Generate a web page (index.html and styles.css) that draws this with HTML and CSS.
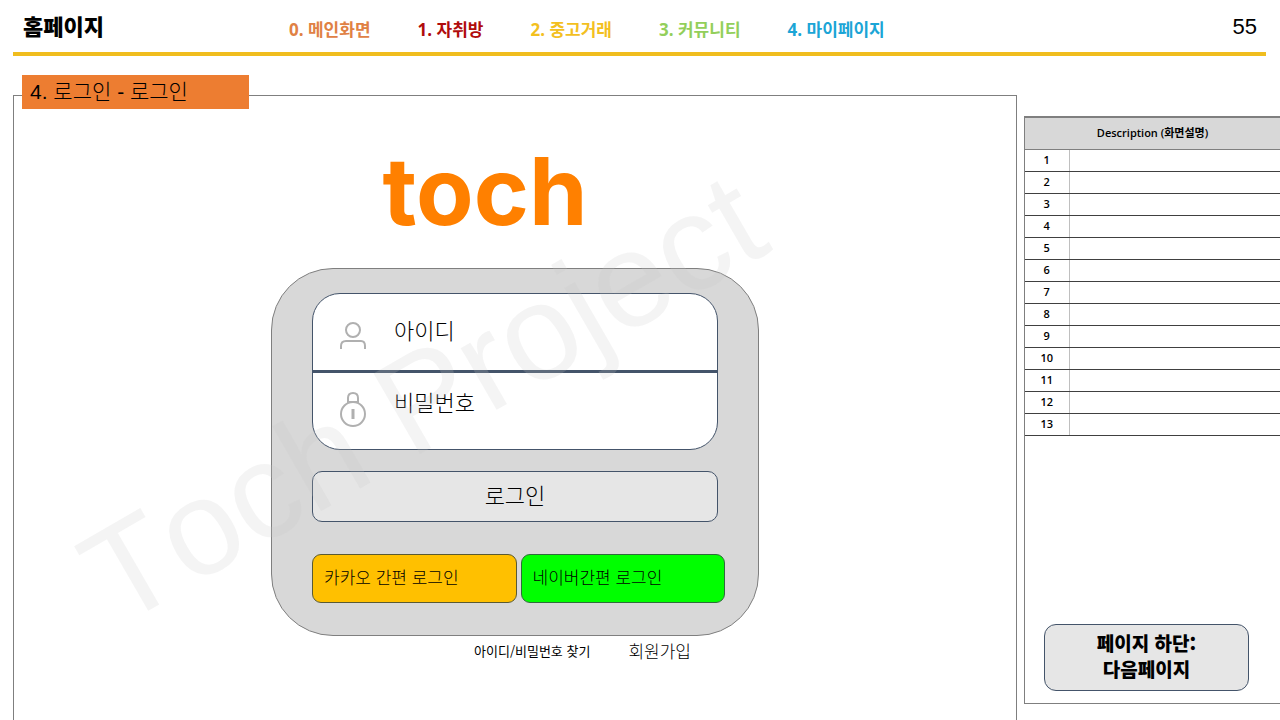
FILE: index.html
```
<!DOCTYPE html>
<html lang="ko">
<head>
    <meta charset="UTF-8">
    <meta name="viewport" content="width=device-width, initial-scale=1.0">
    <title>홈페이지 - 로그인</title>
    <link rel="stylesheet" href="styles.css">
</head>
<body>
    <header class="header">
        <h1 class="title">홈페이지</h1>
        <nav class="menu">
            <a class="menu-main" href="#">0. 메인화면</a>
            <a class="menu-room" href="#">1. 자취방</a>
            <a class="menu-market" href="#">2. 중고거래</a>
            <a class="menu-community" href="#">3. 커뮤니티</a>
            <a class="menu-mypage" href="#">4. 마이페이지</a>
        </nav>
        <span class="page-number">55</span>
    </header>

    <div class="content">
        <main class="board">
            <h2 class="tab">4. 로그인 - 로그인</h2>
            <div class="logo">toch</div>

            <form class="card">
                <div class="fields">
                    <div class="field">
                        <svg class="icon" width="28" height="36" viewBox="0 0 28 36" fill="none" stroke="#b0b0b0" stroke-width="2">
                            <circle cx="13" cy="10" r="7"/>
                            <path d="M1 29v-3q0-5 5-5h15q4 0 4 5v3"/>
                        </svg>
                        <input type="text" placeholder="아이디" aria-label="아이디">
                    </div>
                    <div class="field field-password">
                        <svg class="icon" width="28" height="36" viewBox="0 0 28 36" fill="none" stroke="#b0b0b0" stroke-width="2">
                            <circle cx="13" cy="22" r="12"/>
                            <path d="M8 11V6q0-5 5-5t5 5v5M8 10h10"/>
                            <path d="M13 17v10" stroke-width="3"/>
                        </svg>
                        <input type="password" placeholder="비밀번호" aria-label="비밀번호">
                    </div>
                </div>
                <button class="login" type="button">로그인</button>
                <div class="social">
                    <button class="kakao" type="button">카카오 간편 로그인</button>
                    <button class="naver" type="button">네이버간편 로그인</button>
                </div>
            </form>

            <div class="links">
                <a class="find" href="#">아이디/비밀번호 찾기</a>
                <a class="join" href="#">회원가입</a>
            </div>

            <div class="watermark">Toch Project</div>
        </main>

        <aside class="side">
            <table class="description">
                <thead>
                    <tr><th colspan="2">Description (화면설명)</th></tr>
                </thead>
                <tbody>
                    <tr><td>1</td><td></td></tr>
                    <tr><td>2</td><td></td></tr>
                    <tr><td>3</td><td></td></tr>
                    <tr><td>4</td><td></td></tr>
                    <tr><td>5</td><td></td></tr>
                    <tr><td>6</td><td></td></tr>
                    <tr><td>7</td><td></td></tr>
                    <tr><td>8</td><td></td></tr>
                    <tr><td>9</td><td></td></tr>
                    <tr><td>10</td><td></td></tr>
                    <tr><td>11</td><td></td></tr>
                    <tr><td>12</td><td></td></tr>
                    <tr><td>13</td><td></td></tr>
                </tbody>
            </table>
            <button class="next" type="button">페이지 하단:<br>다음페이지</button>
        </aside>
    </div>
</body>
</html>
```
FILE: styles.css
```
* {
    box-sizing: border-box;
}
body {
    margin: 0;
    min-height: 100vh;
    display: flex;
    flex-direction: column;
    background: #fff;
    color: #000;
    font-family: "Liberation Sans", "Noto Sans CJK KR", sans-serif;
}
a {
    color: inherit;
    text-decoration: none;
}
button, input {
    font-family: "Noto Sans CJK KR", sans-serif;
    color: #000;
}

/* header */
.header {
    display: flex;
    align-items: center;
    height: 56px;
    margin: 0 14px 0 13px;
    padding: 2px 9px 0 10px;
    border-bottom: 4px solid #f0bd1e;
}
.title {
    width: 266px;
    margin: 0;
    padding-bottom: 4px;
    font-family: "Noto Sans CJK KR", sans-serif;
    font-size: 22px;
    font-weight: 900;
}
.menu {
    display: flex;
    flex: 1;
    gap: 47px;
    padding-top: 6px;
    font-family: "Open Sans", "Noto Sans CJK KR", sans-serif;
    font-size: 17px;
    font-weight: 700;
    line-height: 24px;
    white-space: nowrap;
}
.menu-main {
    color: #e08144;
}
.menu-room {
    color: #b00c0c;
}
.menu-market {
    color: #f3c01f;
}
.menu-community {
    color: #93cf5b;
}
.menu-mypage {
    color: #1ba5d6;
}
.page-number {
    font-size: 22px;
}

/* login board */
.content {
    display: flex;
    flex: 1;
    gap: 7px;
    padding: 39px 0 0 13px;
}
.board {
    position: relative;
    flex: 1;
    display: flex;
    flex-direction: column;
    align-items: center;
    border: 1px solid #7f7f7f;
    border-bottom: none;
}
.tab {
    position: absolute;
    top: -21px;
    left: 8px;
    width: 227px;
    margin: 0;
    padding-left: 8px;
    background: #ed7d31;
    font-size: 21px;
    font-weight: 300;
    line-height: 34px;
}
.logo {
    padding: 48px 60px 30px 0;
    color: #ff8000;
    font-family: Inter, sans-serif;
    font-size: 94px;
    font-weight: 700;
    line-height: 94px;
}
.card {
    display: flex;
    flex-direction: column;
    width: 488px;
    padding: 24px 33px 32px 40px;
    border: 1px solid #7f7f7f;
    border-radius: 62px;
    background: #d8d8d8;
}
.fields {
    margin-right: 7px;
    border: 1px solid #44546a;
    border-radius: 28px;
    background: #fff;
    overflow: hidden;
}
.field {
    display: flex;
    align-items: flex-start;
    gap: 26px;
    height: 76px;
    padding: 22px 20px 0 27px;
}
.field-password {
    height: 79px;
    padding-top: 15px;
    border-top: 3px solid #44546a;
}
.icon {
    margin-top: 4px;
}
.field input {
    flex: 1;
    height: 30px;
    padding: 0 0 4px;
    border: none;
    outline: none;
    background: none;
    font-size: 22px;
    font-weight: 300;
    line-height: 26px;
}
.field input::placeholder {
    color: #000;
    opacity: 1;
}
.login {
    height: 51px;
    margin: 21px 7px 32px 0;
    padding-bottom: 6px;
    border: 1px solid #44546a;
    border-radius: 10px;
    background: #e6e6e6;
    font-size: 22px;
    font-weight: 300;
}
.social {
    display: flex;
    gap: 4px;
}
.social button {
    flex: 1;
    height: 49px;
    padding: 0 11px 4px;
    border: 1px solid #5a5a32;
    border-radius: 9px;
    font-size: 17px;
    font-weight: 300;
    text-align: left;
}
.social .kakao {
    background: #ffc000;
}
.social .naver {
    border-color: #2f6b3c;
    background: #00ff00;
}
.links {
    display: flex;
    align-items: center;
    gap: 38px;
    width: 488px;
    padding-left: 203px;
    font-family: "Noto Sans CJK KR", sans-serif;
    line-height: 30px;
}
.find {
    font-size: 13px;
}
.join {
    font-size: 17px;
    font-weight: 300;
}
.watermark {
    position: absolute;
    top: 235px;
    left: 30px;
    color: rgba(200, 200, 200, 0.2);
    font-size: 135px;
    font-kerning: none;
    line-height: 135px;
    white-space: nowrap;
    transform: rotate(-30deg);
    pointer-events: none;
}

/* description panel */
.side {
    display: flex;
    flex-direction: column;
    justify-content: space-between;
    width: 256px;
    margin: 21px 0 16px;
    border-bottom: 1px solid #7f7f7f;
    border-left: 1px solid #7f7f7f;
}
.description {
    width: 100%;
    border-collapse: collapse;
    font-family: "Open Sans", "Noto Sans CJK KR", sans-serif;
    font-size: 11px;
    font-weight: 600;
    line-height: 16px;
}
.description th {
    height: 32px;
    padding: 0;
    border-top: 2px solid #7f7f7f;
    border-bottom: 1px solid #7f7f7f;
    background: #d8d8d8;
    font-weight: 600;
}
.description td {
    height: 22px;
    padding: 0 0 1px;
    border-bottom: 1px solid #404040;
    text-align: center;
}
.description td:first-child {
    width: 44px;
    border-right: 1px solid #bfbfbf;
}
.next {
    width: 205px;
    height: 67px;
    margin: 0 0 12px 19px;
    padding-bottom: 5px;
    border: 1px solid #44546a;
    border-radius: 12px;
    background: #e6e6e6;
    font-size: 19px;
    font-weight: 900;
    line-height: 26px;
}
```
